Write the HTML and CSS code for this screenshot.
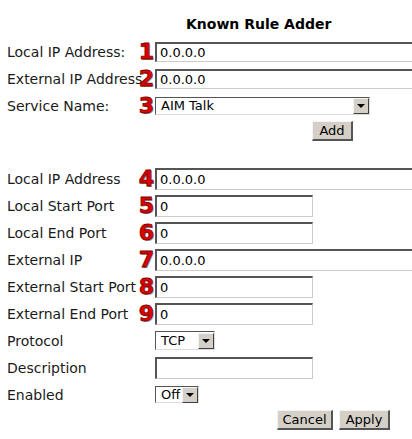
FILE: index.html
```html
<!doctype html>
<html lang="en">
<head>
	<meta charset="UTF-8">
	<title>Known Rule Adder</title>
	<link rel="stylesheet" href="styles.css">
</head>
<body>
<div class="page">
	<h1 class="title">Known Rule Adder</h1>

	<div class="form">
		<div class="row">
			<span class="label">Local IP Address:</span><span class="num">1</span>
			<input class="text wide first" type="text" value="0.0.0.0">
		</div>
		<div class="row">
			<span class="label">External IP Address</span><span class="num">2</span>
			<input class="text wide first" type="text" value="0.0.0.0">
		</div>
		<div class="row">
			<span class="label">Service Name:</span><span class="num">3</span>
			<div class="select service"><span class="value">AIM Talk</span><span class="arrow"></span></div>
		</div>
		<div class="buttons add-row">
			<button class="btn add">Add</button>
		</div>
	</div>

	<div class="form second">
		<div class="row">
			<span class="label">Local IP Address</span><span class="num">4</span>
			<input class="text wide" type="text" value="0.0.0.0">
		</div>
		<div class="row">
			<span class="label">Local Start Port</span><span class="num">5</span>
			<input class="text short" type="text" value="0">
		</div>
		<div class="row">
			<span class="label">Local End Port</span><span class="num">6</span>
			<input class="text short" type="text" value="0">
		</div>
		<div class="row">
			<span class="label">External IP</span><span class="num">7</span>
			<input class="text wide" type="text" value="0.0.0.0">
		</div>
		<div class="row">
			<span class="label">External Start Port</span><span class="num">8</span>
			<input class="text short" type="text" value="0">
		</div>
		<div class="row">
			<span class="label">External End Port</span><span class="num">9</span>
			<input class="text short" type="text" value="0">
		</div>
		<div class="row">
			<span class="label">Protocol</span><span class="num"></span>
			<div class="select protocol"><span class="value">TCP</span><span class="arrow"></span></div>
		</div>
		<div class="row">
			<span class="label">Description</span><span class="num"></span>
			<input class="text short" type="text" value="">
		</div>
		<div class="row">
			<span class="label">Enabled</span><span class="num"></span>
			<div class="select enabled"><span class="value">Off</span><span class="arrow"></span></div>
		</div>
		<div class="buttons">
			<button class="btn cancel">Cancel</button>
			<button class="btn apply">Apply</button>
		</div>
	</div>
</div>
</body>
</html>
```

FILE: styles.css
```css
*{
	margin: 0;
	padding: 0;
	box-sizing: border-box;
}
html, body {
	background: #fff;
	overflow: hidden;
}
body {
	font-family: "DejaVu Sans", Verdana, sans-serif;
	font-size: 14px;
	color: #000;
}

.page {
	padding: 14px 0 0 7px;
	width: 520px;
}

.title {
	font-size: 14px;
	font-weight: bold;
	line-height: 20px;
	padding-left: 179px;
	height: 24px;
}

.row {
	display: grid;
	grid-template-columns: 130px 18px auto;
	align-items: center;
	height: 27px;
}
.label {
	white-space: nowrap;
	color: #1a1a1a;
}
.num {
	font-family: "DejaVu Sans", sans-serif;
	font-weight: bold;
	font-size: 22px;
	line-height: 20px;
	color: #e00000;
	-webkit-text-stroke: 0.8px #7a0000;
	text-shadow: 1px 1px 0 #999;
	text-align: right;
	padding-right: 1px;
}

.text {
	height: 22px;
	font-family: "DejaVu Sans", Verdana, sans-serif;
	font-size: 13px;
	padding: 0 3px;
	border-top: 2px solid #555;
	border-left: 2px solid #555;
	border-right: 1px solid #ccc;
	border-bottom: 1px solid #ccc;
	background: #fff;
	color: #000;
	outline: none;
}
.first {
	height: 20px;
}
.wide {
	width: 300px;
}
.short {
	width: 158px;
}

.select {
	display: flex;
	align-items: center;
	height: 18px;
	border-top: 1px solid #555;
	border-left: 1px solid #555;
	border-right: 1px solid #ddd;
	border-bottom: 1px solid #ddd;
	background: #fff;
	font-size: 13px;
}
.select .value {
	flex: 1;
	padding-left: 5px;
}
.select .arrow {
	width: 16px;
	height: 16px;
	background: #d4d0c8;
	border-top: 1px solid #f4f4f4;
	border-left: 1px solid #f4f4f4;
	border-right: 1px solid #404040;
	border-bottom: 1px solid #404040;
	position: relative;
}
.select .arrow:after {
	content: "";
	position: absolute;
	left: 3px;
	top: 5px;
	border-left: 4px solid transparent;
	border-right: 4px solid transparent;
	border-top: 4px solid #000;
}
.service {
	width: 215px;
}
.protocol {
	width: 60px;
	height: 19px;
}
.enabled {
	width: 44px;
	height: 17px;
}

.buttons {
	display: flex;
	gap: 6px;
	padding-left: 270px;
	padding-top: 2px;
}
.add-row {
	padding-left: 305px;
	padding-top: 2px;
	height: 46px;
}
.btn {
	font-family: "DejaVu Sans", Verdana, sans-serif;
	font-size: 13px;
	height: 20px;
	background: #d4d0c8;
	border-top: 1px solid #f4f4f4;
	border-left: 1px solid #f4f4f4;
	border-right: 2px solid #555;
	border-bottom: 2px solid #555;
	color: #000;
}
.add {
	width: 41px;
}
.cancel {
	width: 56px;
}
.apply {
	width: 51px;
}
```
